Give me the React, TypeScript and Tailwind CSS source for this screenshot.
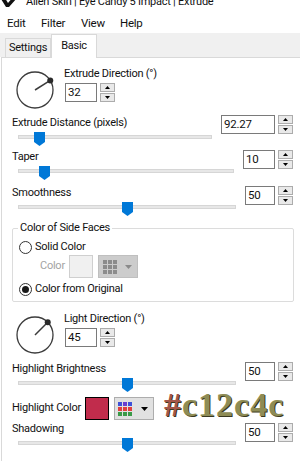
import React from "react";

function Spin({ value, w }: { value: string; w: number }) {
  return (
    <div className="flex h-[19px] shrink-0">
      <div
        className="h-[19px] border border-[#7a7a7a] bg-white pl-[2px] text-[11.5px] leading-[17px]"
        style={{ width: w }}
      >
        {value}
      </div>
      <div className="ml-[3px] flex w-[15px] flex-col gap-[1px]">
        <div className="flex h-[9px] items-center justify-center border border-[#acacac] bg-[#e9e9e9]">
          <svg width="5" height="3" viewBox="0 0 5 3">
            <polygon points="0,3 2.5,0 5,3" fill="#000" />
          </svg>
        </div>
        <div className="flex h-[9px] items-center justify-center border border-[#acacac] bg-[#e9e9e9]">
          <svg width="5" height="3" viewBox="0 0 5 3">
            <polygon points="0,0 5,0 2.5,3" fill="#000" />
          </svg>
        </div>
      </div>
    </div>
  );
}

function Slider({ frac }: { frac: number }) {
  return (
    <div className="relative ml-[6px] h-[16px] pt-[5px]">
      <div className="h-[4px] border border-[#d6d6d6] bg-[#e7e7e7]" />
      <svg
        className="absolute top-[2px]"
        width="11"
        height="14"
        viewBox="0 0 11 14"
        style={{ left: `calc(${frac * 100}% - ${frac * 11}px)` }}
      >
        <polygon points="0,0 11,0 11,10 5.5,14 0,10" fill="#0078d7" />
      </svg>
    </div>
  );
}

function Section({
  label,
  value,
  w,
  frac,
  mt,
  spinMt = "mt-0",
}: {
  label: string;
  value: string;
  w: number;
  frac: number;
  mt: string;
  spinMt?: string;
}) {
  return (
    <div className={`flex pl-[10px] pr-[7px] ${mt}`}>
      <div className="mr-[9px] flex-1">
        <div className="h-[14px] whitespace-nowrap leading-[14px]">{label}</div>
        <Slider frac={frac} />
      </div>
      <div className={spinMt}>
        <Spin value={value} w={w} />
      </div>
    </div>
  );
}

function Dial({ angle }: { angle: number }) {
  const r = 18;
  const a = (angle * Math.PI) / 180;
  const kx = 19 + r * Math.cos(a);
  const ky = 19 - r * Math.sin(a);
  return (
    <svg width="38" height="38" viewBox="0 0 38 38" className="shrink-0">
      <circle cx="19" cy="19" r={r} fill="none" stroke="#3c3c3c" strokeWidth="1.3" />
      <line x1="19" y1="19" x2={kx} y2={ky} stroke="#3c3c3c" strokeWidth="1.5" />
      <circle cx={kx} cy={ky} r="3" fill="#2a2a2a" />
    </svg>
  );
}

function DialRow({ angle, label, value, mt }: { angle: number; label: string; value: string; mt: string }) {
  return (
    <div className={`flex items-start pl-[14px] ${mt}`}>
      <div className="mt-[4px]">
        <Dial angle={angle} />
      </div>
      <div className="ml-[10px]">
        <div className="h-[14px] whitespace-nowrap leading-[14px]">{label}</div>
        <div className="ml-[1px] mt-[2px]">
          <Spin value={value} w={32} />
        </div>
      </div>
    </div>
  );
}

function Radio({ checked, label }: { checked: boolean; label: string }) {
  return (
    <div className="flex h-[14px] items-center">
      <div className="ml-[1px] flex h-[13px] w-[13px] items-center justify-center rounded-full border border-[#333] bg-white">
        {checked && <div className="h-[7px] w-[7px] rounded-full bg-[#1a1a1a]" />}
      </div>
      <span className="ml-[3px] whitespace-nowrap leading-[14px]">{label}</span>
    </div>
  );
}

function Grid({ colors }: { colors: string[] }) {
  return (
    <svg width="14" height="14" viewBox="0 0 14 14">
      {colors.map((c, i) => (
        <rect key={i} x={(i % 3) * 5} y={Math.floor(i / 3) * 5} width="4" height="4" fill={c} />
      ))}
    </svg>
  );
}

export default function App() {
  const gray = Array(9).fill("#8c8c8c");
  const colorful = [
    "#3f51d8", "#6a3fd0", "#3f51d8",
    "#e0403f", "#e0403f", "#e0403f",
    "#3a9a48", "#3a9a48", "#3a9a48",
  ];
  return (
    <div className="h-[461px] w-[300px] overflow-hidden bg-white text-[11px] tracking-[-0.25px] text-[#111] [font-family:Roboto,sans-serif]">
      {/* title */}
      <div className="flex h-[12px] items-start overflow-hidden">
        <svg width="16" height="10" viewBox="0 0 16 10" className="ml-[1px] mt-[-2px]">
          <path d="M0 1 L4 0 L7 5 L13 -2 L16 0 L8 9 L5 9 Z" fill="#111" />
        </svg>
        <span className="ml-[9px] mt-[-6px] whitespace-nowrap text-[11px] leading-[16px]">Alien Skin | Eye Candy 5 Impact | Extrude</span>
      </div>
      {/* menu */}
      <div className="flex h-[21px] items-center pl-[7px] pt-[3px] text-[11.5px]">
        <span className="w-[34px]">Edit</span>
        <span className="w-[40px]">Filter</span>
        <span className="w-[39px]">View</span>
        <span>Help</span>
      </div>
      {/* tabs */}
      <div className="flex h-[24px] items-end bg-[#f0f0f0] pl-[5px]">
        <div className="flex h-[19px] w-[46px] items-center justify-center border border-b-0 border-[#d9d9d9] bg-[#f0f0f0]">
          Settings
        </div>
        <div className="relative z-10 -mb-[1px] flex h-[24px] w-[46px] items-start justify-center border border-b-0 border-[#d9d9d9] bg-white pt-[3px]">
          Basic
        </div>
      </div>
      {/* panel */}
      <div className="ml-[1px] h-[420px] border-l border-t border-[#d9d9d9] bg-white">
        <DialRow angle={32} label="Extrude Direction (°)" value="32" mt="mt-[9px]" />
        <Section label="Extrude Distance (pixels)" value="92.27" w={54} frac={0.085} mt="mt-[7px]" spinMt="-mt-[1px]" />
        <Section label="Taper" value="10" w={32} frac={0.1} mt="mt-[4px]" />
        <Section label="Smoothness" value="50" w={30} frac={0.5} mt="mt-[6px]" />

        <fieldset className="ml-[10px] mt-[5px] w-[282px] rounded-[2px] border border-[#dcdcdc] pb-[5px] pl-[5px]">
          <legend className="px-[2px] leading-[14px]">Color of Side Faces</legend>
          <div className="mt-[5px]">
            <Radio checked={false} label="Solid Color" />
          </div>
          <div className="mt-[1px] flex h-[23px] items-center pl-[22px]">
            <span className="w-[29px] text-[#a3a3a3]">Color</span>
            <div className="h-[23px] w-[24px] border border-[#cfcfcf] bg-[#f0f0f0]" />
            <div className="ml-[5px] flex h-[23px] w-[40px] items-center border border-[#bfbfbf] bg-[#cccccc] pl-[4px]">
              <Grid colors={gray} />
              <svg width="7" height="4" viewBox="0 0 7 4" className="ml-[8px]">
                <polygon points="0,0 7,0 3.5,4" fill="#8a8a8a" />
              </svg>
            </div>
          </div>
          <div className="mt-[4px]">
            <Radio checked={true} label="Color from Original" />
          </div>
        </fieldset>

        <DialRow angle={45} label="Light Direction (°)" value="45" mt="mt-[10px]" />
        <Section label="Highlight Brightness" value="50" w={30} frac={0.5} mt="mt-[8px]" />

        <div className="mt-[5px] flex h-[23px] items-center pl-[10px]">
          <span className="w-[73px] shrink-0 whitespace-nowrap">Highlight Color</span>
          <div className="h-[23px] w-[24px] border border-black bg-[#c12c4c]" />
          <div className="ml-[5px] flex h-[23px] w-[40px] items-center border border-[#adadad] bg-[#e1e1e1] pl-[3px]">
            <Grid colors={colorful} />
            <svg width="7" height="4" viewBox="0 0 7 4" className="ml-[9px]">
              <polygon points="0,0 7,0 3.5,4" fill="#000" />
            </svg>
          </div>
          <span className="mb-[8px] ml-[10px] whitespace-nowrap text-[34px] font-bold leading-none tracking-[1px] [font-family:'Liberation_Serif',serif] [text-shadow:1px_1px_0_#3a3820]">
            <span className="text-[#a4574a]">#</span>
            <span className="text-[#8e8c55]">c12c4c</span>
          </span>
        </div>

        <Section label="Shadowing" value="50" w={30} frac={0.5} mt="mt-[2px]" spinMt="mt-[1px]" />
      </div>
    </div>
  );
}
